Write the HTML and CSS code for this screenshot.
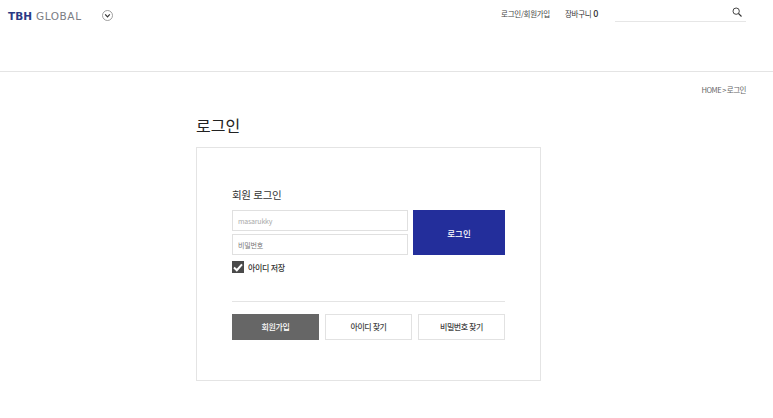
FILE: index.html
```html
<!DOCTYPE html>
<html lang="ko">
<head>
<meta charset="utf-8">
<title>로그인</title>
<link rel="stylesheet" href="styles.css">
</head>
<body>
<header class="header">
  <div class="header-left">
    <a class="logo"><b>TBH</b> GLOBAL</a>
    <span class="chevron"><svg width="11" height="11" viewBox="0 0 11 11"><circle cx="5.5" cy="5.5" r="5" fill="none" stroke="#888" stroke-width="0.8"/><path d="M3.2 4.4 5.5 6.8 7.8 4.4" fill="none" stroke="#333" stroke-width="1.2"/></svg></span>
  </div>
  <nav class="header-right">
    <a class="nav-link">로그인/회원가입</a>
    <a class="nav-link cart">장바구니 <b>0</b></a>
    <div class="search"><svg width="10" height="10" viewBox="0 0 12 12"><circle cx="5" cy="5" r="3.8" fill="none" stroke="#333" stroke-width="1.1"/><path d="M7.8 7.8 11.4 11.4" stroke="#333" stroke-width="1.3"/></svg></div>
  </nav>
</header>
<div class="crumb">HOME &gt; 로그인</div>
<main class="main">
  <h1 class="title">로그인</h1>
  <section class="card">
    <h2 class="card-title">회원 로그인</h2>
    <div class="login-row">
      <div class="fields">
        <div class="field muted-latin">masarukky</div>
        <div class="field">비밀번호</div>
      </div>
      <button class="submit">로그인</button>
    </div>
    <label class="save"><span class="check"><svg width="10" height="9" viewBox="0 0 10 9"><path d="M1 4.5 3.8 7.2 9 1.4" fill="none" stroke="#fff" stroke-width="2"/></svg></span>아이디 저장</label>
    <div class="actions">
      <a class="action primary">회원가입</a>
      <a class="action">아이디 찾기</a>
      <a class="action">비밀번호 찾기</a>
    </div>
  </section>
</main>
</body>
</html>
```
FILE: styles.css
```css
* { box-sizing: border-box; }
html, body { margin: 0; padding: 0; background: #fff; }
body { font-family: "Noto Sans CJK KR", "Liberation Sans", sans-serif; color: #333; overflow: hidden; height: 418px; }
.header { height: 72px; border-bottom: 1px solid #e4e4e4; display: flex; justify-content: space-between; align-items: flex-start; padding: 0 27px 0 8px; }
.header-left { display: flex; align-items: center; height: 32px; }
.logo { font-family: "DejaVu Sans", sans-serif; font-size: 10.5px; letter-spacing: 0.6px; color: #7b7d84; width: 94px; line-height: 33px; white-space: nowrap; }
.logo b { color: #2a3a85; font-weight: 700; letter-spacing: 0; }
.chevron { display: flex; margin-top: -2px; }
.header-right { display: flex; align-items: flex-start; }
.nav-link { font-size: 7.5px; letter-spacing: -0.3px; line-height: 27px; color: #444; }
.cart { margin-left: 15px; color: #333; }
.cart b { font-size: 9px; font-weight: 500; }
.search { width: 131px; height: 22px; margin-left: 17px; border-bottom: 1px solid #e6e6e6; display: flex; justify-content: flex-end; padding: 7px 4px 0 0; }
.crumb { text-align: right; font-size: 7.5px; letter-spacing: -0.5px; word-spacing: -0.6px; color: #666; padding: 12px 27px 0 0; line-height: 12px; }
.main { width: 345px; margin: 0 0 0 196px; }
.title { margin: 16px 0 0; font-size: 16px; font-weight: 400; line-height: 26px; color: #222; height: 35px; }
.card { width: 345px; height: 234px; border: 1px solid #e4e4e4; padding: 39px 35px 0; }
.card-title { margin: 0; font-size: 10.5px; letter-spacing: -0.3px; font-weight: 400; line-height: 16px; color: #333; }
.login-row { display: flex; gap: 5px; margin-top: 7px; }
.fields { display: flex; flex-direction: column; gap: 3px; width: 176px; }
.field { height: 21px; border: 1px solid #e0e0e0; font-size: 7px; letter-spacing: -0.2px; line-height: 20px; padding-left: 5px; color: #777; }
.muted-latin { color: #aaa; }
.submit { width: 92px; height: 45px; border: 0; background: #232e9b; color: #fff; font: 500 8.5px "Noto Sans CJK KR", sans-serif; padding: 0; }
.save { display: flex; align-items: center; gap: 4px; margin-top: 6px; font-size: 8px; font-weight: 500; letter-spacing: -0.3px; word-spacing: -0.4px; color: #333; height: 12px; }
.check { width: 12px; height: 12px; background: #4a4a4a; display: flex; align-items: center; justify-content: center; }
.actions { margin-top: 28px; padding-top: 12px; border-top: 1px solid #e4e4e4; display: flex; gap: 6px; }
.action { flex: 1; height: 26px; border: 1px solid #e2e2e2; font-size: 8px; font-weight: 500; letter-spacing: -0.4px; word-spacing: -0.5px; line-height: 24px; text-align: center; color: #444; }
.action.primary { background: #666; border-color: #666; color: #fff; }
```
